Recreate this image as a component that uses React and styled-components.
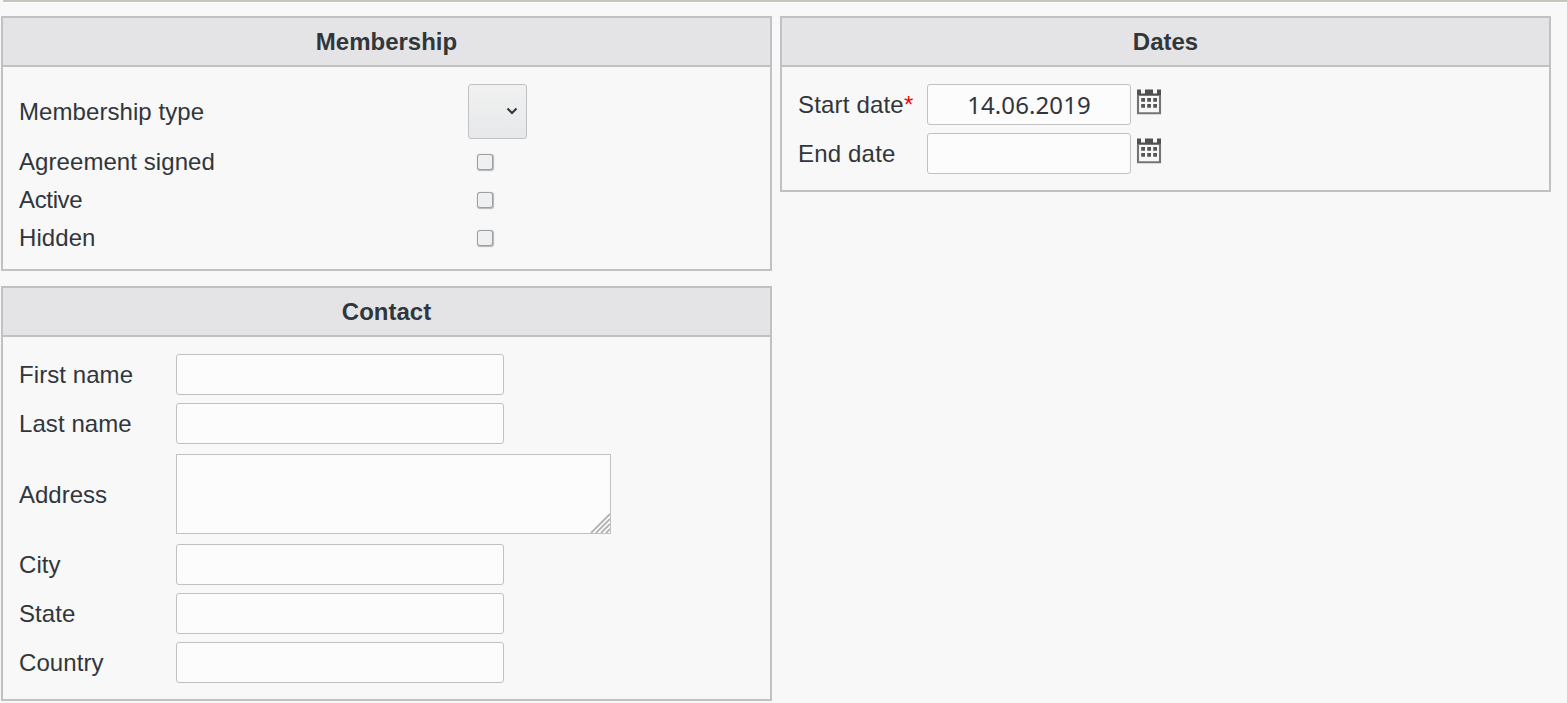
import React from "react";
import styled, { createGlobalStyle } from "styled-components";

const line = "#c1c1c3";
const ink = "#31363b";

const GlobalStyle = createGlobalStyle`
  * { box-sizing: border-box; }
  body {
    margin: 0;
    background: #f8f8f8;
    color: ${ink};
    font: 24px/28px "Liberation Sans", Arial, sans-serif;
    overflow: hidden;
  }
`;

const Page = styled.div`
  height: 703px;
  overflow: hidden;
`;

const TopRule = styled.div`
  height: 3px;
  margin-left: 3px;
  background: #fdfdfd;
  border-top: 2px solid #c6c6bd;
`;

const Columns = styled.main`
  display: flex;
  align-items: flex-start;
  gap: 8px;
  padding: 13px 0 0 1px;
`;

const Column = styled.div`
  display: flex;
  flex-direction: column;
  gap: 15px;
  width: 771px;
`;

const Panel = styled.section`
  border: 2px solid ${line};
`;

const PanelTitle = styled.h2`
  display: flex;
  align-items: center;
  justify-content: center;
  height: 49px;
  margin: 0;
  border-bottom: 2px solid ${line};
  background: #e4e4e6;
  font-size: 24px;
  font-weight: bold;
`;

const PanelBody = styled.div`
  padding: 13px 16px 12px;
`;

const Row = styled.div`
  display: flex;
  align-items: center;
  height: ${(p) => p.$height || 49}px;
`;

const Label = styled.label`
  flex: none;
  width: ${(p) => p.$width}px;
  padding-top: ${(p) => p.$drop || 0}px;
  letter-spacing: ${(p) => p.$tracking ?? 0.07}px;
  white-space: nowrap;
`;

const Required = styled.span`
  color: #f00;
`;

const TextInput = styled.input`
  width: ${(p) => p.$width || 328}px;
  height: 41px;
  margin: 0;
  padding: 0 4px;
  border: 1px solid ${line};
  border-radius: 3px;
  background: #fcfcfc;
  color: ${ink};
  font: 24px "Noto Sans", sans-serif;
  letter-spacing: 0.1px;
  text-align: ${(p) => p.$align || "left"};
  outline: none;
`;

const AddressBox = styled.div`
  display: flex;
  align-items: flex-end;
  width: 435px;
  height: 80px;
  border: 1px solid ${line};
  background: #fcfcfc;
`;

const AddressInput = styled.textarea`
  flex: 1;
  height: 78px;
  border: 0;
  background: transparent;
  resize: none;
  outline: none;
`;

const Grip = styled.svg`
  display: block;
  flex: none;
`;

const SelectButton = styled.button`
  display: flex;
  align-items: center;
  justify-content: flex-end;
  width: 59px;
  height: 55px;
  padding: 0 8px 2px 0;
  border: 1px solid ${line};
  border-radius: 3px;
  background: linear-gradient(#f1f1f1, #e6e8ea);
`;

const Checkbox = styled.input`
  appearance: none;
  width: 16px;
  height: 16px;
  margin: 0 0 0 9px;
  border: 1px solid #9c9fa2;
  border-radius: 3px;
  background: #eff0f1;
  box-shadow: 0.5px 0.5px 1px #b4b5b6;
`;

const CalendarButton = styled.button`
  width: 26px;
  height: 28px;
  margin: -7px 0 0 5px;
  padding: 0;
  border: 0;
  background: none;
`;

function Calendar() {
  return (
    <CalendarButton aria-label="Choose date">
      <svg width="26" height="28" viewBox="0 0 26 28" display="block">
        <path d="M1 2.5h4v4h4V2.5h8v4h4V2.5h4v6.3H1z" fill="#505050" />
        <path d="M2 8v18.2h22V8" fill="none" stroke="#747474" strokeWidth="2.1" />
        <path d="M5.2 11h3.8v3.8H5.2zM11.2 11h3.8v3.8h-3.8zM17.2 11h3.8v3.8h-3.8zM5.2 17h3.8v3.8H5.2zM11.2 17h3.8v3.8h-3.8zM17.2 17h3.8v3.8h-3.8z" fill="#565656" />
      </svg>
    </CalendarButton>
  );
}

function Section({ title, children }) {
  return (
    <Panel>
      <PanelTitle>{title}</PanelTitle>
      <PanelBody>{children}</PanelBody>
    </Panel>
  );
}

function ContactField({ label }) {
  return (
    <Row>
      <Label $width={157}>{label}</Label>
      <TextInput aria-label={label} />
    </Row>
  );
}

function DateField({ label, required, value }) {
  return (
    <Row>
      <Label $width={129} $tracking={0.18}>
        {label}
        {required && <Required>*</Required>}
      </Label>
      <TextInput $width={204} $align="center" defaultValue={value} aria-label={label} />
      <Calendar />
    </Row>
  );
}

export default function App() {
  return (
    <Page>
      <GlobalStyle />
      <TopRule />
      <Columns>
        <Column>
          <Section title="Membership">
            <Row $height={63}>
              <Label $width={449}>Membership type</Label>
              <SelectButton aria-label="Membership type">
                <svg width="12" height="8" viewBox="0 0 12 8">
                  <path d="M1.5 1.5 6 6l4.5-4.5" fill="none" stroke={ink} strokeWidth="2" />
                </svg>
              </SelectButton>
            </Row>
            {["Agreement signed", "Active", "Hidden"].map((name) => (
              <Row key={name} $height={38}>
                <Label $width={449} $tracking={name === "Active" ? -0.35 : 0.07}>{name}</Label>
                <Checkbox type="checkbox" aria-label={name} />
              </Row>
            ))}
          </Section>
          <Section title="Contact">
            <ContactField label="First name" />
            <ContactField label="Last name" />
            <Row $height={92}>
              <Label $width={157} $drop={2} $tracking={0}>Address</Label>
              <AddressBox>
                <AddressInput aria-label="Address" />
                <Grip width="20" height="20" viewBox="0 0 20 20">
                  <path d="M1 20 20 1M6 20 20 6M11 20 20 11M16 20 20 16" stroke="#b2b2b2" strokeWidth="1.8" />
                </Grip>
              </AddressBox>
            </Row>
            <ContactField label="City" />
            <ContactField label="State" />
            <ContactField label="Country" />
          </Section>
        </Column>
        <Column>
          <Section title="Dates">
            <DateField label="Start date" required value="14.06.2019" />
            <DateField label="End date" />
          </Section>
        </Column>
      </Columns>
    </Page>
  );
}
